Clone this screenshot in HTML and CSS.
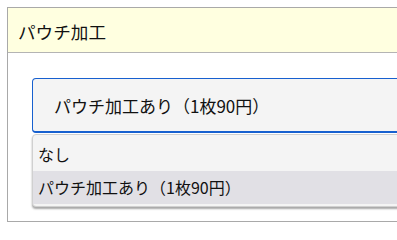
FILE: index.html
```html
<!DOCTYPE html>
<html lang="ja">
<head>
<meta charset="utf-8">
<link rel="stylesheet" href="styles.css">
</head>
<body>
<div class="panel">
  <div class="panel-head">パウチ加工</div>
  <div class="panel-body">
    <div class="select">パウチ加工あり（1枚90円）</div>
    <ul class="menu">
      <li class="opt">なし</li>
      <li class="opt active">パウチ加工あり（1枚90円）</li>
    </ul>
  </div>
</div>
</body>
</html>
```
FILE: styles.css
```css
html, body {
  margin: 0;
  padding: 0;
  overflow: hidden;
  background: #ffffff;
}
body {
  padding: 7px 0 0 7px;
  font-family: "Noto Sans CJK JP", "Noto Sans", sans-serif;
  color: #111;
  width: 390px;
}
.panel {
  width: 440px;
  border: 1px solid #a9a9a9;
  box-sizing: border-box;
}
.panel-head {
  height: 44px;
  background: #ffffe0;
  border-bottom: 1px solid #b4b4b4;
  font-size: 17.6px;
  line-height: 47px;
  padding-left: 10px;
}
.panel-body {
  padding: 25px 0 14px 24px;
}
.select {
  height: 52px;
  box-sizing: content-box;
  border: 1px solid #1760cf;
  border-bottom-width: 2px;
  border-radius: 4px;
  background: #f4f4f4;
  font-size: 17px;
  line-height: 54px;
  padding-left: 21px;
}
.menu {
  list-style: none;
  margin: 1px 0 0 0;
  padding: 3px 0 2px 0;
  background: #f4f4f4;
  border: 1px solid #d0d0d0;
  border-radius: 4px;
  box-shadow: 0 2px 2px rgba(0, 0, 0, 0.35);
}
.opt {
  height: 33px;
  line-height: 33px;
  font-size: 16px;
  padding-left: 5px;
}
.opt.active {
  background: #e1e0e5;
}
```
